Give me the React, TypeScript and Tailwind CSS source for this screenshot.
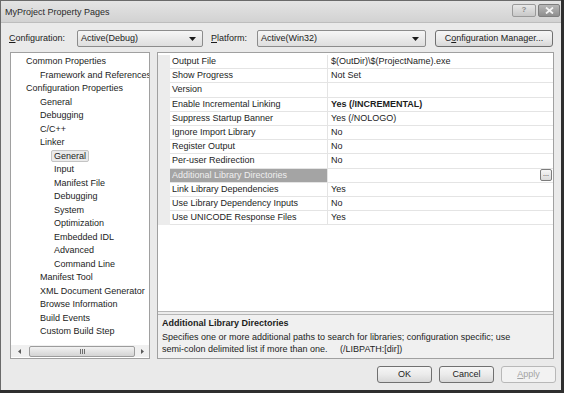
import React from "react";

type TreeItem = { label: string; level: number; selected?: boolean };

const tree: TreeItem[] = [
  { label: "Common Properties", level: 0 },
  { label: "Framework and References", level: 1 },
  { label: "Configuration Properties", level: 0 },
  { label: "General", level: 1 },
  { label: "Debugging", level: 1 },
  { label: "C/C++", level: 1 },
  { label: "Linker", level: 1 },
  { label: "General", level: 2, selected: true },
  { label: "Input", level: 2 },
  { label: "Manifest File", level: 2 },
  { label: "Debugging", level: 2 },
  { label: "System", level: 2 },
  { label: "Optimization", level: 2 },
  { label: "Embedded IDL", level: 2 },
  { label: "Advanced", level: 2 },
  { label: "Command Line", level: 2 },
  { label: "Manifest Tool", level: 1 },
  { label: "XML Document Generator", level: 1 },
  { label: "Browse Information", level: 1 },
  { label: "Build Events", level: 1 },
  { label: "Custom Build Step", level: 1 },
];

type Row = { name: string; value: string; bold?: boolean; active?: boolean };

const rows: Row[] = [
  { name: "Output File", value: "$(OutDir)\\$(ProjectName).exe" },
  { name: "Show Progress", value: "Not Set" },
  { name: "Version", value: "" },
  { name: "Enable Incremental Linking", value: "Yes (/INCREMENTAL)", bold: true },
  { name: "Suppress Startup Banner", value: "Yes (/NOLOGO)" },
  { name: "Ignore Import Library", value: "No" },
  { name: "Register Output", value: "No" },
  { name: "Per-user Redirection", value: "No" },
  { name: "Additional Library Directories", value: "", active: true },
  { name: "Link Library Dependencies", value: "Yes" },
  { name: "Use Library Dependency Inputs", value: "No" },
  { name: "Use UNICODE Response Files", value: "Yes" },
];

const indent = ["pl-[12px]", "pl-[26px]", "pl-[40px]"];

function DownArrow() {
  return (
    <svg width="7" height="4" viewBox="0 0 7 4" className="shrink-0">
      <path d="M0 0h7L3.5 4z" fill="#1a1a1a" />
    </svg>
  );
}

function Combo({ value, width }: { value: string; width: string }) {
  return (
    <div
      className={`${width} h-[17px] flex items-center justify-between pl-[3px] pr-[6px] rounded-[2px] border border-[#8c8c8c] bg-gradient-to-b from-[#f6f6f6] to-[#dedede]`}
    >
      <span>{value}</span>
      <DownArrow />
    </div>
  );
}

function Button({ children, disabled, width }: { children: React.ReactNode; disabled?: boolean; width: string }) {
  return (
    <div
      className={`${width} h-[17px] flex items-center justify-center rounded-[3px] border ${
        disabled
          ? "border-[#b8b8b8] bg-[#f2f2f2] text-[#a3a3a3]"
          : "border-[#707070] bg-gradient-to-b from-[#f6f6f6] via-[#ebebeb] to-[#d8d8d8]"
      }`}
    >
      {children}
    </div>
  );
}

export default function App() {
  return (
    <div className="w-[564px] h-[393px] bg-[#2f2f2f] overflow-hidden font-['Liberation_Sans',Arial,sans-serif] text-[9px] leading-none text-[#1c1c1c]">
      <div className="w-[561px] h-[390px] flex flex-col border-l border-t border-[#6a6a6a] bg-[#d8d8d8]">
        {/* title bar */}
        <div className="h-[21px] shrink-0 flex items-center justify-between pl-[4px] pr-[1px] bg-gradient-to-b from-[#e4e4e4] to-[#d2d2d2]">
          <span className="text-[#2a2a2a] mt-[1px]">MyProject Property Pages</span>
          <div className="flex items-center gap-[2px] -mt-[3px]">
            <div className="w-[24px] h-[13px] flex items-center justify-center rounded-[2px] border border-[#9a9a9a] bg-gradient-to-b from-[#e8e8e8] to-[#c8c8c8] text-[#8a8a8a] text-[8px] font-bold">
              ?
            </div>
            <div className="w-[22px] h-[13px] flex items-center justify-center rounded-[2px] border border-[#7e7e7e] bg-gradient-to-b from-[#b8b8b8] to-[#8e8e8e]">
              <svg width="9" height="7" viewBox="0 0 9 7">
                <path d="M1 0.5L8 6.5M8 0.5L1 6.5" stroke="#f4f4f4" strokeWidth="1.8" />
              </svg>
            </div>
          </div>
        </div>

        {/* client */}
        <div className="flex-1 flex flex-col bg-[#eaeaea] border-t border-[#bdbdbd]">
          {/* configuration row */}
          <div className="mt-[7px] h-[17px] flex items-center pl-[8px]">
            <span className="w-[68px]">
              <span className="underline">C</span>onfiguration:
            </span>
            <Combo value="Active(Debug)" width="w-[126px]" />
            <span className="w-[54px] pl-[8px]">
              <span className="underline">P</span>latform:
            </span>
            <Combo value="Active(Win32)" width="w-[169px]" />
            <div className="ml-[9px]">
              <Button width="w-[118px]">
                C<span className="underline">o</span>nfiguration Manager...
              </Button>
            </div>
          </div>

          {/* main panels */}
          <div className="mt-[5px] h-[307px] flex pl-[9px]">
            {/* tree */}
            <div className="w-[140px] h-full flex flex-col border border-[#a0a0a0] bg-white overflow-hidden">
              <div className="pt-[2px] flex flex-col">
                {tree.map((t, i) => (
                  <div
                    key={`${t.label}-${i}`}
                    className={`h-[13.5px] flex items-center whitespace-nowrap ${indent[t.level]}`}
                  >
                    <span
                      className={`h-[12px] flex items-center px-[2px] border rounded-[2px] ${
                        t.selected ? "border-[#c4c4c4] bg-[#ebebeb]" : "border-transparent"
                      }`}
                    >
                      {t.label}
                    </span>
                  </div>
                ))}
              </div>
              {/* horizontal scrollbar */}
              <div className="mt-auto mb-[1px] h-[12px] flex items-center bg-[#f0f0f0]">
                <div className="w-[17px] flex justify-center">
                  <svg width="3" height="5" viewBox="0 0 3 5">
                    <path d="M3 0v5L0 2.5z" fill="#5a5a5a" />
                  </svg>
                </div>
                <div className="ml-[1px] w-[106px] h-[11px] flex items-center justify-center rounded-[2px] border border-[#9c9c9c] bg-gradient-to-b from-[#f2f2f2] to-[#d4d4d4]">
                  <div className="flex gap-[1px]">
                    <div className="w-[1px] h-[5px] bg-[#6e6e6e]" />
                    <div className="w-[1px] h-[5px] bg-[#6e6e6e]" />
                    <div className="w-[1px] h-[5px] bg-[#6e6e6e]" />
                  </div>
                </div>
                <div className="flex-1 flex justify-center">
                  <svg width="3" height="5" viewBox="0 0 3 5">
                    <path d="M0 0v5L3 2.5z" fill="#5a5a5a" />
                  </svg>
                </div>
              </div>
            </div>

            {/* property grid */}
            <div className="ml-[7px] w-[397px] h-full flex flex-col border border-[#a0a0a0] bg-white">
              <div className="flex-1 pt-[2px] flex flex-col">
                {rows.map((r) => (
                  <div key={r.name} className="h-[14.2px] flex whitespace-nowrap">
                    <div className="w-[12px] bg-[#ececec]" />
                    <div
                      className={`w-[158px] flex items-center pl-[2px] border-b border-r border-[#e4e4e4] ${
                        r.active ? "bg-[#a4a4a4] text-[#efefef]" : ""
                      }`}
                    >
                      {r.name}
                    </div>
                    <div
                      className={`flex-1 flex items-center justify-between pl-[3px] pr-[1px] border-b border-[#e4e4e4] ${
                        r.bold ? "font-bold" : ""
                      }`}
                    >
                      <span>{r.value}</span>
                      {r.active && (
                        <div className="w-[12px] h-[12px] flex items-end justify-center pb-[3px] rounded-[2px] border border-[#7c7c7c] bg-gradient-to-b from-[#f6f6f6] to-[#dadada] text-[7px] leading-none">
                          ...
                        </div>
                      )}
                    </div>
                  </div>
                ))}
              </div>
              {/* splitter */}
              <div className="h-[4px] border-y border-[#b6b6b6] bg-[#ececec]" />
              {/* description */}
              <div className="h-[43px] bg-[#f0f0f0] px-[4px] pt-[2px] leading-[12px]">
                <div className="font-bold">Additional Library Directories</div>
                <div className="mt-[2px] whitespace-pre">
                  {"Specifies one or more additional paths to search for libraries; configuration specific; use\nsemi-colon delimited list if more than one.     (/LIBPATH:[dir])"}
                </div>
              </div>
            </div>
          </div>

          {/* dialog buttons */}
          <div className="mt-[7px] h-[17px] flex justify-end gap-[7px] pr-[5px]">
            <Button width="w-[55px]">OK</Button>
            <Button width="w-[55px]">Cancel</Button>
            <Button width="w-[55px]" disabled>
              <span className="underline">A</span>pply
            </Button>
          </div>
        </div>
      </div>
    </div>
  );
}
